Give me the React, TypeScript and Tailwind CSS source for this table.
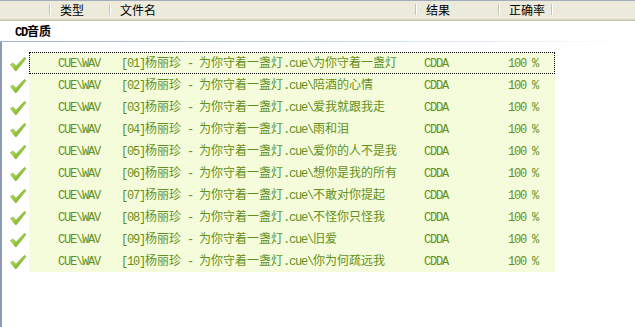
import React from "react";

const rows = [
    "[01]杨丽珍 - 为你守着一盏灯.cue\\为你守着一盏灯",
    "[02]杨丽珍 - 为你守着一盏灯.cue\\陪酒的心情",
    "[03]杨丽珍 - 为你守着一盏灯.cue\\爱我就跟我走",
    "[04]杨丽珍 - 为你守着一盏灯.cue\\雨和泪",
    "[05]杨丽珍 - 为你守着一盏灯.cue\\爱你的人不是我",
    "[06]杨丽珍 - 为你守着一盏灯.cue\\想你是我的所有",
    "[07]杨丽珍 - 为你守着一盏灯.cue\\不敢对你提起",
    "[08]杨丽珍 - 为你守着一盏灯.cue\\不怪你只怪我",
    "[09]杨丽珍 - 为你守着一盏灯.cue\\旧爱",
    "[10]杨丽珍 - 为你守着一盏灯.cue\\你为何疏远我",
]

// half-width latin in a narrow mono face, CJK in Noto
const Mixed = ({text}: { text: string }) => (
    <>
        {text.split(/([\x20-\x7e]+)/).filter(Boolean).map((part, i) =>
            /^[\x20-\x7e]+$/.test(part)
                ? <span key={i} className="font-['Liberation_Mono'] tracking-[-1.2px] whitespace-pre">{part}</span>
                : <span key={i} className="font-['Noto_Sans_CJK_SC']">{part}</span>
        )}
    </>
)

const Check = () => (
    <svg width="18" height="16" viewBox="0 0 18 16">
        <defs>
            <linearGradient id="chk" x1="0" y1="0" x2="1" y2="1">
                <stop offset="0" stopColor="#d4ec86"/>
                <stop offset="0.5" stopColor="#9ccb3c"/>
                <stop offset="1" stopColor="#5d9418"/>
            </linearGradient>
        </defs>
        <path d="M1.5 8.5 L4 7 L7 10.2 L15.5 1.2 L17 2.6 L7.4 14.6 L6.2 14.6 Z" fill="url(#chk)" stroke="#6e9c28"
              strokeWidth="0.5" strokeLinejoin="round"/>
    </svg>
)

const HeaderCell = ({label, w}: { label?: string, w: string }) => (
    <div className={`${w} h-full flex items-center relative`}>
        {label && <span className="pl-[9px] text-[12px] text-black font-['Noto_Sans_CJK_SC']">{label}</span>}
        <div className="absolute right-0 top-[3px] bottom-[4px] w-[2px] flex">
            <div className="w-px bg-[#c7c5b2]"/>
            <div className="w-px bg-white"/>
        </div>
    </div>
)

const Header = () => (
    <div className="h-[20px] border-t border-[#a3acba] bg-[#ebeadb] flex flex-col">
        <div className="flex-1 flex">
            <HeaderCell w="w-[51px]"/>
            <HeaderCell w="w-[60px]" label="类型"/>
            <HeaderCell w="w-[306px]" label="文件名"/>
            <HeaderCell w="w-[83px]" label="结果"/>
            <HeaderCell w="w-[53px]" label="正确率"/>
        </div>
        <div className="h-px bg-[#e2dfcc]"/>
        <div className="h-px bg-[#d6d2bd]"/>
        <div className="h-px bg-[#cbc7b5]"/>
    </div>
)

const Row = ({name, focused}: { name: string, focused: boolean }) => (
    <div className="flex h-[22px] items-center">
        <div className="w-[27px] flex justify-center pl-[4px] pt-[1px]">
            <Check/>
        </div>
        <div
            className={`w-[526px] h-full flex items-center bg-[#f5fcdc] text-[12px] leading-[20px] text-[#64901a] border ${focused ? "border-dotted border-black" : "border-transparent"}`}>
            <div className="w-[28px]"/>
            <div className="w-[63px]"><Mixed text="CUE\WAV"/></div>
            <div className="w-[303px] whitespace-nowrap"><Mixed text={name}/></div>
            <div className="w-[84px]"><Mixed text="CDDA"/></div>
            <div><Mixed text="100 %"/></div>
        </div>
    </div>
)

export default function App() {
    return (
        <div className="w-[635px] h-[327px] bg-white overflow-hidden flex flex-col">
            <Header/>
            <div className="h-[20px] flex items-end pl-[15px]">
                <span className="text-[12px] leading-[14px] font-bold text-black">
                    <Mixed text="CD音质"/>
                </span>
            </div>
            <div className="h-px bg-gradient-to-r from-[#9cb2d6] via-[#c9d6ea] to-white mt-[1px]"/>
            <div className="flex-1 border-l-2 border-[#8b9bb3] pt-[10px] flex flex-col">
                {rows.map((r, i) => <Row key={i} name={r} focused={i === 0}/>)}
            </div>
        </div>
    )
}
